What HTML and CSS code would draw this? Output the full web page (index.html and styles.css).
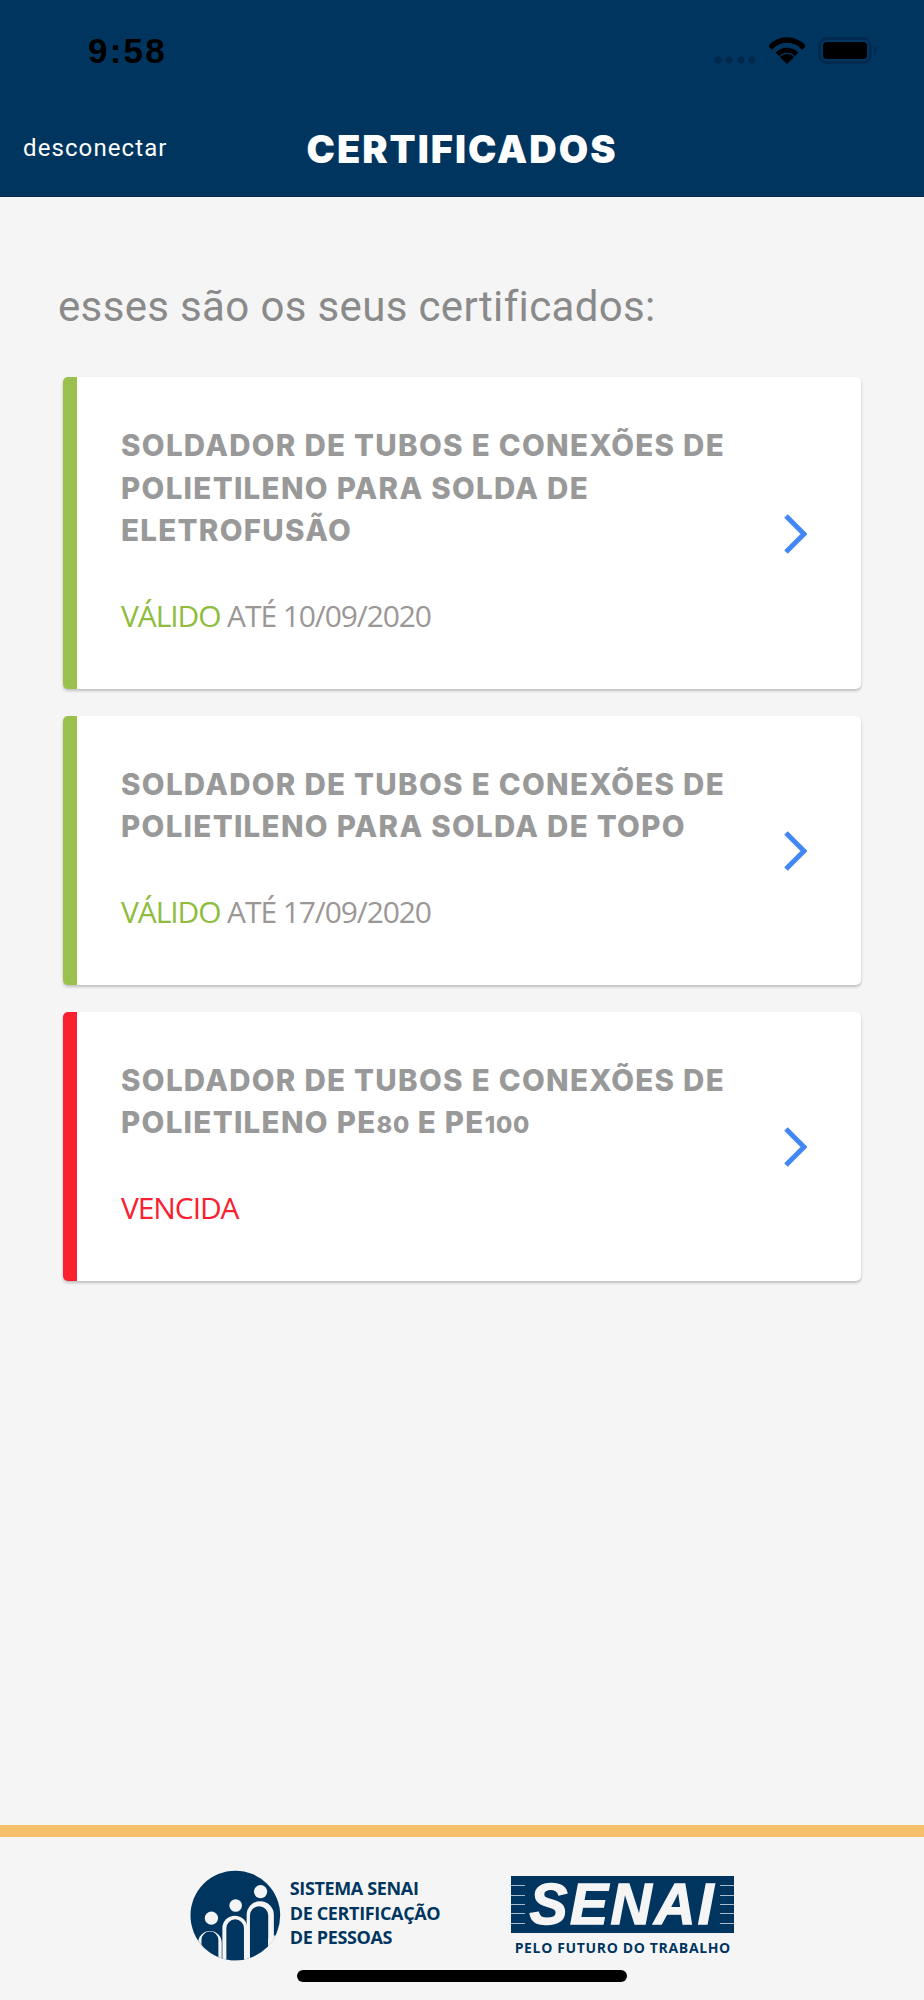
FILE: index.html
```html
<!DOCTYPE html>
<html lang="pt-BR">
<head>
<meta charset="utf-8">
<title>Certificados</title>
<link rel="stylesheet" href="styles.css">
</head>
<body>
<div class="screen">
  <header class="header">
    <div class="status">
      <span class="time">9:58</span>
      <div class="status-icons">
        <svg class="signal" width="42" height="8" viewBox="0 0 42 8"><g fill="#00294d"><circle cx="4" cy="4" r="3.6"/><circle cx="15" cy="4" r="3.6"/><circle cx="27" cy="4" r="3.6"/><circle cx="38" cy="4" r="3.6"/></g></svg>
        <svg class="wifi" width="36" height="27" viewBox="0 0 36 27"><path d="M1 11 A22 22 0 0 1 35 11" fill="none" stroke="#000" stroke-width="5.4"/><path d="M8.5 17.5 A13 13 0 0 1 27.5 17.5" fill="none" stroke="#000" stroke-width="5"/><path d="M18 27 L10.8 20 A10 10 0 0 1 25.2 20 Z" fill="#000"/></svg>
        <svg class="battery" width="60" height="27" viewBox="0 0 60 27"><rect x="1.5" y="1.5" width="51" height="24" rx="7" fill="none" stroke="#00294d" stroke-width="2.4"/><rect x="5" y="5" width="44" height="17" rx="4" fill="#000"/><path d="M56 9 C59 10 59 17 56 18 Z" fill="#00294d"/></svg>
      </div>
    </div>
    <nav class="nav">
      <a class="nav-link">desconectar</a>
      <h1 class="nav-title">CERTIFICADOS</h1>
      <span></span>
    </nav>
  </header>

  <main class="main">
    <h2 class="lead">esses são os seus certificados:</h2>
    <ul class="cards">
      <li class="card card-ok">
        <div class="card-body">
          <h3 class="card-title">SOLDADOR DE TUBOS E CONEXÕES DE POLIETILENO PARA SOLDA DE ELETROFUSÃO</h3>
          <p class="card-status"><span class="ok">VÁLIDO</span> ATÉ 10/09/2020</p>
        </div>
        <svg class="chev" width="24" height="42" viewBox="0 0 24 42"><path d="M3 3 L21 21 L3 39" fill="none" stroke="#4287f5" stroke-width="5"/></svg>
      </li>
      <li class="card card-ok">
        <div class="card-body">
          <h3 class="card-title">SOLDADOR DE TUBOS E CONEXÕES DE POLIETILENO PARA SOLDA DE TOPO</h3>
          <p class="card-status"><span class="ok">VÁLIDO</span> ATÉ 17/09/2020</p>
        </div>
        <svg class="chev" width="24" height="42" viewBox="0 0 24 42"><path d="M3 3 L21 21 L3 39" fill="none" stroke="#4287f5" stroke-width="5"/></svg>
      </li>
      <li class="card card-bad">
        <div class="card-body">
          <h3 class="card-title"><span class="line">SOLDADOR DE TUBOS E CONEXÕES DE</span><span class="line">POLIETILENO PE<span class="num">80</span> E PE<span class="num">100</span></span></h3>
          <p class="card-status"><span class="bad">VENCIDA</span></p>
        </div>
        <svg class="chev" width="24" height="42" viewBox="0 0 24 42"><path d="M3 3 L21 21 L3 39" fill="none" stroke="#4287f5" stroke-width="5"/></svg>
      </li>
    </ul>
  </main>

  <footer class="footer">
    <div class="logo-cert">
      <svg class="logo-mark" width="91" height="93" viewBox="0 0 273 280">
        <defs><clipPath id="disc"><circle cx="136" cy="140" r="135"/></clipPath></defs>
        <circle cx="136" cy="140" r="135" fill="#003560"/>
        <g clip-path="url(#disc)">
          <path d="M24 290 V222 A35 35 0 0 1 95 222 V290 Z" fill="#f5f5f5"/>
          <path d="M34 290 V214 A25 25 0 0 1 85 214 V290 Z" fill="#003560"/>
          <path d="M97 290 V178 A37 37 0 0 1 172 178 V290 Z" fill="#f5f5f5"/>
          <path d="M109 290 V178 A26 26 0 0 1 162 178 V290 Z" fill="#003560"/>
          <path d="M170 290 V138 A41 41 0 0 1 252 138 V290 Z" fill="#f5f5f5"/>
          <path d="M180 290 V140 A27 27 0 0 1 235 140 V290 Z" fill="#003560"/>
          <path d="M235 290 V210 L252 200 L290 200 V290 Z" fill="#f5f5f5"/>
          <circle cx="64" cy="148" r="20" fill="#f5f5f5"/>
          <circle cx="137" cy="110" r="19" fill="#f5f5f5"/>
          <circle cx="212" cy="68" r="20" fill="#f5f5f5"/>
        </g>
      </svg>
      <p class="cert-text">SISTEMA SENAI<br>DE CERTIFICAÇÃO<br>DE PESSOAS</p>
    </div>
    <div class="logo-senai">
      <div class="senai-box">
        <div class="stripes"><i></i><i></i><i></i><i></i><i></i></div>
        <span class="senai-word">SENAI</span>
        <div class="stripes"><i></i><i></i><i></i><i></i><i></i></div>
      </div>
      <p class="senai-tag">PELO FUTURO DO TRABALHO</p>
    </div>
    <div class="home-bar"></div>
  </footer>
</div>
</body>
</html>
```
FILE: styles.css
```css
* { box-sizing: border-box; }
html, body { margin: 0; padding: 0; }
body { background: #f5f5f5; }
.screen {
  position: relative;
  height: 2000px;
  display: flex;
  flex-direction: column;
  background: #f5f5f5;
}

.header {
  height: 197px;
  background: #00355f;
  border-bottom: 1px solid #002b4e;
  display: flex;
  flex-direction: column;
}
.status {
  height: 100px;
  display: flex;
  align-items: center;
  justify-content: space-between;
  padding: 0 48px 0 88px;
}
.time {
  font: 700 35px/1 "Liberation Sans", sans-serif;
  letter-spacing: 2.2px;
  color: #000;
}
.status-icons { display: flex; align-items: flex-end; }
.signal { margin-right: 13px; }
.wifi { margin-right: 13px; }
.battery { margin-right: -2px; }

.nav {
  flex: 1;
  display: grid;
  grid-template-columns: 1fr auto 1fr;
  align-items: center;
  padding-top: 2px;
}
.nav-link {
  margin: 0 0 2px 23px;
  font: 400 24px/1 Roboto, sans-serif;
  letter-spacing: 1.1px;
  color: #fff;
}
.nav-title {
  margin: 0;
  font: 900 38px/1 Inter, sans-serif;
  letter-spacing: 2px;
  color: #fff;
}

.main { flex: 1; padding: 86px 63px 0 58px; }
.lead {
  margin: 0 0 46px;
  font: 400 42px/48px Roboto, sans-serif;
  letter-spacing: 0.35px;
  color: #8a8a8a;
}
.cards {
  list-style: none;
  margin: 0 0 0 5px;
  padding: 0;
  display: flex;
  flex-direction: column;
  gap: 27px;
}
.card {
  display: flex;
  align-items: center;
  background: #fff;
  border-left: 14px solid;
  border-radius: 5px;
  box-shadow: 0 2px 3px rgba(0, 0, 0, 0.22);
  padding: 47px 54px 53px 44px;
}
.card-ok { border-left-color: #9bc04d; }
.card-bad { border-left-color: #f9212f; }
.card-body { flex: 1; min-width: 0; }
.card-title {
  margin: 0;
  max-width: 620px;
  font: 800 29.5px/42.5px Inter, sans-serif;
  letter-spacing: 1.3px;
  color: #999;
}
.line { display: block; }
.num { font-size: 0.8em; line-height: 0; letter-spacing: 0.8px; }
.card-status {
  margin: 44px 0 0;
  font: 400 30px/40px "Open Sans", sans-serif;
  letter-spacing: -1.1px;
  color: #9b9797;
}
.ok { color: #8ebd3c; }
.bad { color: #f9212f; }
.chev { flex: none; margin-top: 8px; }

.footer {
  position: relative;
  height: 175px;
  border-top: 12px solid #f7c06c;
  padding-top: 33px;
  display: flex;
  justify-content: center;
  align-items: flex-start;
  gap: 71px;
}
.logo-cert { display: flex; align-items: flex-start; gap: 9px; }
.logo-mark { flex: none; margin-top: -1px; }
.cert-text {
  margin: 6px 0 0;
  font: 700 18px/24.5px "Open Sans", sans-serif;
  letter-spacing: -0.35px;
  color: #003560;
}
.logo-senai { width: 223px; padding-top: 6px; }
.senai-box {
  height: 57px;
  background: #003560;
  display: flex;
  align-items: center;
  justify-content: space-between;
}
.stripes {
  width: 14px;
  display: flex;
  flex-direction: column;
  gap: 8.4px;
}
.stripes i { display: block; height: 1px; background: #a9bac8; }
.senai-word {
  font: italic 700 57px/57px "Liberation Sans", sans-serif;
  letter-spacing: 2.5px;
  color: #f5f5f5;
  -webkit-text-stroke: 1.4px #f5f5f5;
}
.senai-tag {
  margin: 8px 0 0;
  font: 700 14px/14px "Open Sans", sans-serif;
  letter-spacing: 0.65px;
  text-align: center;
  white-space: nowrap;
  color: #003560;
}
.home-bar {
  position: absolute;
  left: 297px;
  top: 133px;
  width: 330px;
  height: 12px;
  border-radius: 6px;
  background: #000;
}
```
